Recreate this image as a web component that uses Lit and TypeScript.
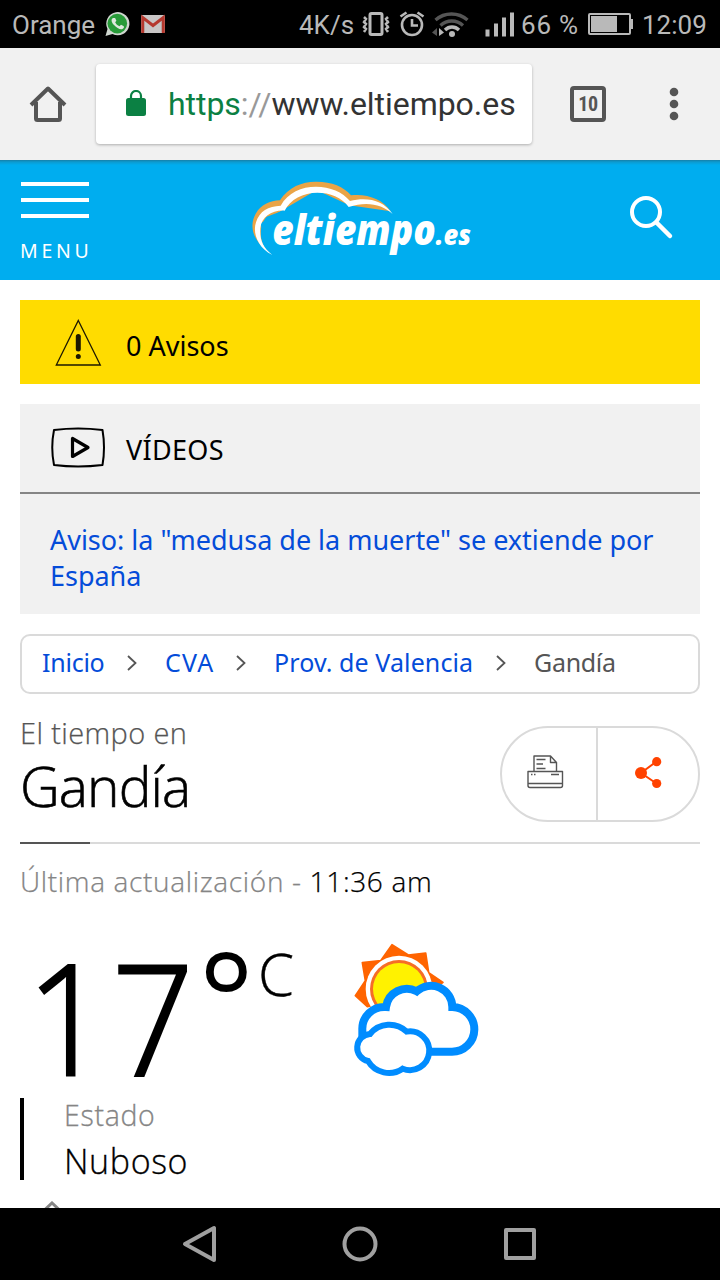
import { LitElement, html, css, svg } from "lit";
import { customElement } from "lit/decorators.js";

@customElement("status-bar")
class StatusBar extends LitElement {
  static styles = css`
    :host { display: grid; grid-template-columns: 93px 36px 158px 63px 37px 32px 90px 67px 54px 1fr; height: 48px; background: #000; color: #b9b9b9; font: 26px/50px Roboto, sans-serif; padding-left: 12px; box-sizing: border-box; white-space: nowrap; overflow: hidden; }
    svg { display: block; height: 48px; }
    .pct { letter-spacing: .8px; }
  `;
  render() {
    return html`
      <span>Orange</span>
      <svg width="26" height="48" viewBox="105 0 26 48">
        <path d="M105.500 36 L107.500 29 A11.600 11.600 0 1 1 112.500 34 Z" fill="#cfd6cf"/>
        <circle cx="117.300" cy="23.600" r="9.800" fill="#289b39"/>
        <path d="M113 18c-2 1-2 4 1 7s6 5 8.500 4c1.500-1 2-2 1-3l-2.500-1.300-1.500 1.600c-2-.7-3.500-2.300-4.300-4l1.200-1.500-1.300-2.800z" fill="#dde8dd"/>
      </svg>
      <svg width="24" height="48" viewBox="141 0 24 48">
        <rect x="141" y="15" width="24" height="18" rx="1.500" fill="#c9c6c6"/>
        <path d="M144 32V18l9 8 9-8V32" fill="none" stroke="#aaa" stroke-width=".8"/>
        <path d="M142.700 33V17.500L153 25.500 163.300 17.500V33" fill="none" stroke="#b5382e" stroke-width="3"/>
      </svg>
      <span>4K/s</span>
      <svg width="28" height="48" viewBox="362 0 28 48" fill="none" stroke="#b9b9b9">
        <rect x="370" y="13.500" width="12" height="21" rx="1.500" stroke-width="3"/>
        <path d="M364 17l2 2-2 3 2 2-2 3 2 2-2 3M388 17l-2 2 2 3-2 2 2 3-2 2 2 3" stroke-width="2.500"/>
      </svg>
      <svg width="26" height="48" viewBox="399 0 26 48" fill="none" stroke="#b9b9b9" stroke-width="2.600">
        <circle cx="412" cy="25" r="10"/><path d="M412 19v6.500h6M400.500 16.500l6-4M423.500 16.500l-6-4"/>
      </svg>
      <svg width="84" height="48" viewBox="431 0 84 48" fill="none">
        <path d="M435.500 20c9-8 23-8 32 0M440.500 25.500c6.500-6 16-6 22.500 0" stroke="#555" stroke-width="3.300"/>
        <path d="M445 30c4-4 10-4 14 0" stroke="#b9b9b9" stroke-width="3.300"/><circle cx="452" cy="34" r="3" fill="#b9b9b9"/>
        <path d="M432 32.500l5-4.500v8z" fill="#555"/><path d="M444 32.500l-5-4.500v8z" fill="#b9b9b9"/>
        <path d="M487.500 36.500v-7M496 36.500v-13M504 36.500v-19M512 36.500v-24" stroke="#b9b9b9" stroke-width="4"/>
      </svg>
      <span class="pct">66 %</span>
      <svg width="46" height="48" viewBox="588 0 46 48">
        <rect x="589" y="14" width="41" height="20" rx="1" fill="none" stroke="#b9b9b9" stroke-width="2"/>
        <path d="M591 16h26v16h-26zM630 19h3v10h-3z" fill="#b9b9b9"/>
      </svg>
      <span>12:09</span>`;
  }
}

@customElement("browser-bar")
class BrowserBar extends LitElement {
  static styles = css`
    :host { display: flex; align-items: center; height: 112px; background: #f1f1f1; font-family: Roboto, sans-serif; box-sizing: border-box; padding: 0 0 0 28px; }
    svg { display: block; }
    .url { display: flex; align-items: center; box-sizing: border-box; width: 436px; height: 80px; margin-left: 28px; padding-left: 30px; background: #fff; border-radius: 4px; box-shadow: 0 1px 3px rgba(0,0,0,.28); font-size: 32px; line-height: 80px; color: #333; white-space: nowrap; }
    .addr { margin-left: 22px; letter-spacing: -.04px; }
    .ok { color: #0b8043; }
    .sep { color: #999; }
    .tabs { box-sizing: border-box; width: 36px; height: 36px; margin-left: 38px; border: 4px solid #555; border-radius: 4px; font: bold 20px/29px "Roboto Condensed", Roboto, sans-serif; color: #555; text-align: center; letter-spacing: -.3px; }
    .dots { margin-left: 62px; }
  `;
  render() {
    return html`
      <svg width="40" height="40" viewBox="28 84 40 40" fill="none" stroke="#555" stroke-width="4" stroke-linejoin="round"><path d="M31 105L48 88.500 65 105"/><path d="M36 102v16.500q0 1.500 1.500 1.500h21q1.500 0 1.500-1.500V102"/></svg>
      <div class="url">
        <svg width="20" height="28" viewBox="0 0 20 28"><rect y="8" width="20" height="18" rx="2.500" fill="#0b8043"/><path d="M5 9V6a5 5 0 0 1 10 0v3" fill="none" stroke="#0b8043" stroke-width="2.200"/></svg>
        <span class="addr"><span class="ok">https</span><span class="sep">://</span>www.eltiempo.es</span>
      </div>
      <div class="tabs">10</div>
      <svg class="dots" width="12" height="36" fill="#555"><circle cx="6" cy="6" r="4.300"/><circle cx="6" cy="18" r="4.300"/><circle cx="6" cy="30" r="4.300"/></svg>`;
  }
}

@customElement("site-header")
class SiteHeader extends LitElement {
  static styles = css`
    :host { display: grid; grid-template-columns: 240px 240px 1fr; height: 120px; background: linear-gradient(#167fa8 0, #0c9bd0 2px, #00adef 5px); color: #fff; font-family: "Noto Sans", sans-serif; }
    svg { display: block; }
    .menu { padding: 22px 0 0 21px; }
    .bars { display: grid; gap: 12px; width: 68px; }
    .bars i { height: 4px; background: #fff; }
    .label { display: block; margin: 19px 0 0 -1px; font-size: 19.500px; line-height: 28px; letter-spacing: 3.700px; }
    .brand { font-family: "Open Sans", sans-serif; font-style: italic; font-weight: 800; }
    .search { margin: 35px 0 0 149px; }
  `;
  render() {
    return html`
      <div class="menu"><div class="bars"><i></i><i></i><i></i></div><span class="label">MENU</span></div>
      <svg width="240" height="120" viewBox="0 0 720 360">
        <path fill="#eaa446" d="M75 265C32 232 30 190 48 160C62 135 90 122 120 121C145 80 190 64 230 65C275 65 312 80 333 106C380 100 430 118 452 154L328 136L230 90L134 146L62 190Z"/>
        <path fill="#00adef" d="M95 284C58 262 52 200 80 170L134 150L232 96L328 140L457 160L400 260Z"/>
        <path fill="#fff" d="M97 285C50 262 38 215 48 187C58 153 85 139 122 137C144 97 185 80 228 80C270 80 308 96 330 123C380 110 430 120 458 162C425 132 380 123 326 141C305 111 270 98 232 98C190 98 150 118 134 152C95 150 65 170 61 205C59 240 68 262 97 285Z"/>
        <text class="brand" fill="#fff" x="97" y="255" font-size="127" textLength="596" lengthAdjust="spacingAndGlyphs">eltiempo<tspan font-size="87">.es</tspan></text>
      </svg>
      <svg class="search" width="45" height="45" viewBox="629 195 45 45" fill="none" stroke="#fff"><circle cx="646" cy="212" r="14" stroke-width="4"/><path d="M656.500 222.500L670 236" stroke-width="4.500" stroke-linecap="round"/></svg>`;
  }
}

@customElement("weather-page")
class WeatherPage extends LitElement {
  static styles = css`
    :host { display: block; height: 928px; overflow: hidden; padding: 20px 20px 0; box-sizing: border-box; background: #fff; font-family: "Noto Sans", sans-serif; color: #000; white-space: nowrap; }
    svg { display: block; flex: none; }
    .row { display: flex; align-items: center; }
    .warn { height: 84px; background: #ffdc00; padding-left: 34px; font-size: 27px; }
    .warn span { margin: 6px 0 0 24px; }
    .videos { margin-top: 20px; height: 210px; background: #f1f1f1; }
    .vhead { height: 90px; box-sizing: border-box; border-bottom: 2px solid #858585; padding-left: 30px; font-size: 27px; }
    .vhead svg { margin-bottom: 2px; }
    .vhead span { margin: 3px 0 0 21px; letter-spacing: .3px; }
    .vlink { padding: 28px 30px 0; color: #044cd9; font-size: 27px; line-height: 36px; letter-spacing: -.02px; }
    .crumbs { box-sizing: border-box; height: 60px; margin-top: 20px; border: 2px solid #dadada; border-radius: 10px; display: grid; grid-template-columns: 84px 39px 70px 39px 221px 39px 1fr; align-items: center; padding: 0 0 3px 20px; font-size: 25px; color: #044cd9; }
    .crumbs span { margin-top: -2px; letter-spacing: .1px; }
    .crumbs svg { margin-left: 1px; }
    .crumbs .first { letter-spacing: -.25px; }
    .crumbs .cva { letter-spacing: 1.200px; }
    .crumbs .here { color: #555; letter-spacing: -.3px; }
    .title { height: 150px; display: flex; justify-content: space-between; box-sizing: border-box; border-bottom: 2px solid #dadada; }
    .sup { font: 300 29px/36px "Open Sans", sans-serif; color: #555; margin-top: 21px; letter-spacing: .38px; -webkit-text-stroke: .25px; }
    .city { font: 300 55px/66px "Open Sans", sans-serif; margin: 2px 0 0 0; letter-spacing: -.9px; -webkit-text-stroke: .6px; }
    .tools { display: flex; align-items: center; box-sizing: border-box; width: 200px; height: 96px; margin-top: 32px; border: 2px solid #dadada; border-radius: 48px; }
    .tools svg { margin-bottom: 3px; }
    .tools svg:first-child { margin: 0 0 5px 24px; }
    .tools i { width: 2px; height: 92px; background: #dadada; margin: 0 36px 0 32px; }
    .accent { width: 70px; height: 2px; margin-top: -2px; background: #555; }
    .update { font: 300 28px/40px "Open Sans", sans-serif; margin-top: 17px; color: #858585; letter-spacing: .66px; -webkit-text-stroke: .25px; }
    .update b { font-weight: 300; color: #000; }
    .now { display: flex; height: 168px; margin-top: 29px; align-items: flex-start; font-family: "Open Sans", sans-serif; font-weight: 300; }
    .temp { display: flex; width: 320px; }
    .temp svg { overflow: visible; }
    .state { height: 82px; border-left: 4px solid #000; padding-left: 40px; box-sizing: border-box; font-family: "Open Sans", sans-serif; font-weight: 300; -webkit-text-stroke: .3px; }
    .k { font-size: 28.500px; line-height: 34px; color: #858585; letter-spacing: .7px; }
    .v { font-size: 34px; line-height: 50px; margin-top: 4px; letter-spacing: .6px; }
    .up { margin: 21px 0 0 24px; }
  `;
  chevron() {
    return html`<svg width="10" height="16" fill="none" stroke="#555" stroke-width="1.800"><path d="M1 1l7.500 7L1 15"/></svg>`;
  }
  render() {
    return html`
      <div class="row warn">
        <svg width="48" height="48" viewBox="0 0 48 48"><path d="M24.300 2.500L46.300 47H2.300Z" fill="none" stroke="#1c1800" stroke-width="1.300"/><path d="M24.300 18.500v12.500" stroke="#1c1800" stroke-width="5" stroke-linecap="round"/><circle cx="24.300" cy="38.500" r="2.500" fill="#1c1800"/></svg>
        <span>0 Avisos</span>
      </div>
      <div class="videos">
        <div class="row vhead">
          <svg width="55" height="42" viewBox="50 426 55 42" fill="none" stroke="#000" stroke-linejoin="round"><path d="M54 430Q78 427 102.500 430Q105.500 447.500 102.500 465Q78 468 54 465Q50.500 447.500 54 430Z" stroke-width="2"/><path d="M72.500 438.500V456.500L88 447.500Z" stroke-width="3.200"/></svg>
          <span>VÍDEOS</span>
        </div>
        <div class="vlink">Aviso: la "medusa de la muerte" se extiende por<br>España</div>
      </div>
      <div class="crumbs"><span class="first">Inicio</span>${this.chevron()}<span class="cva">CVA</span>${this.chevron()}<span>Prov. de Valencia</span>${this.chevron()}<span class="here">Gandía</span></div>
      <div class="title">
        <div><div class="sup">El tiempo en</div><div class="city">Gandía</div></div>
        <div class="tools">
          <svg width="38" height="36" viewBox="526 754 38 36" fill="none" stroke="#555" stroke-width="1.400" stroke-linejoin="round"><path d="M534 771V756H550.500L556.500 762.500V771M550.500 756V762.500H556.500M536.500 759.500H545.500M536.500 764H543M536.500 768.500H545.500"/><path d="M528 771.500H562.500V785.500Q562.500 787.500 560.500 787.500H530Q528 787.500 528 785.500ZM528 783.500H562.500M531 774.500h1.500M534 774.500h1.500M551 774.500h8"/></svg>
          <i></i>
          <svg width="30" height="34" viewBox="634 756 30 34" fill="#ff4200" stroke="#ff4200"><path d="M656.500 761.500L641 773L656.500 783.500" fill="none" stroke-width="2"/><circle cx="641" cy="773" r="6" stroke="none"/><circle cx="656.700" cy="761.700" r="4.600" stroke="none"/><circle cx="656.700" cy="783.500" r="4.600" stroke="none"/></svg>
        </div>
      </div>
      <div class="accent"></div>
      <div class="update">Última actualización - <b>11:36 am</b></div>
      <div class="now">
        <div class="temp">
          <svg width="290" height="160" viewBox="20 930 290 160">
            <text transform="translate(26.500 1075) scale(.93 1)" font-size="154" letter-spacing="4" stroke="#000" stroke-width="2.800">17</text>
            <text x="198.600" y="1047" font-size="130" font-weight="400">°</text>
            <text x="258" y="996" font-size="58" stroke="#000" stroke-width=".4">C</text>
          </svg>
        </div>
        <svg width="160" height="160" viewBox="0 0 480 480">
          <path fill="#ff6400" stroke="#ff6400" stroke-width="5" stroke-linejoin="round" d="M46 197L76 152L67 98L122 92L156 44L205 75L257 69L266 128L309 157L268 188L82 230Z"/>
          <circle cx="177" cy="177" r="100" fill="#fff"/><circle cx="177" cy="177" r="87" fill="#f66d26"/><circle cx="177" cy="177" r="78" fill="#fff200"/>
          <path fill="#fff" stroke="#008cff" stroke-width="24" d="M265 365H335A66 66 0 0 0 337 231A64 64 0 0 0 230 184A63 63 0 0 0 138 231A66 66 0 0 0 67 300V330"/>
          <path fill="#fff" stroke="#008cff" stroke-width="18" d="M90 312A41 41 0 0 0 84 393A73 73 0 0 0 188 416A58 58 0 1 0 200 305A75 75 0 0 0 90 312Z"/>
        </svg>
      </div>
      <div class="state"><div class="k">Estado</div><div class="v">Nuboso</div></div>
      <svg class="up" width="16" height="16" fill="none" stroke="#858585" stroke-width="3"><path d="M0 9.500L8 2l8 7.500"/></svg>`;
  }
}

@customElement("nav-bar")
class NavBar extends LitElement {
  static styles = css`:host { display: flex; justify-content: center; align-items: center; gap: 120px; height: 72px; background: #000; } svg { display: block; }`;
  render() {
    const shapes = [
      svg`<path d="M34 4V36L5 20Z"/>`,
      svg`<circle cx="20" cy="20" r="15.500"/>`,
      svg`<rect x="6" y="6" width="28" height="28"/>`,
    ];
    return shapes.map((s) => html`<svg width="40" height="40" fill="none" stroke="#a0a0a0" stroke-width="4" stroke-linejoin="round">${s}</svg>`);
  }
}

@customElement("app-root")
class AppRoot extends LitElement {
  static styles = css`:host { display: block; width: 720px; height: 1280px; overflow: hidden; }`;
  render() {
    return html`<status-bar></status-bar><browser-bar></browser-bar><site-header></site-header><weather-page></weather-page><nav-bar></nav-bar>`;
  }
}
